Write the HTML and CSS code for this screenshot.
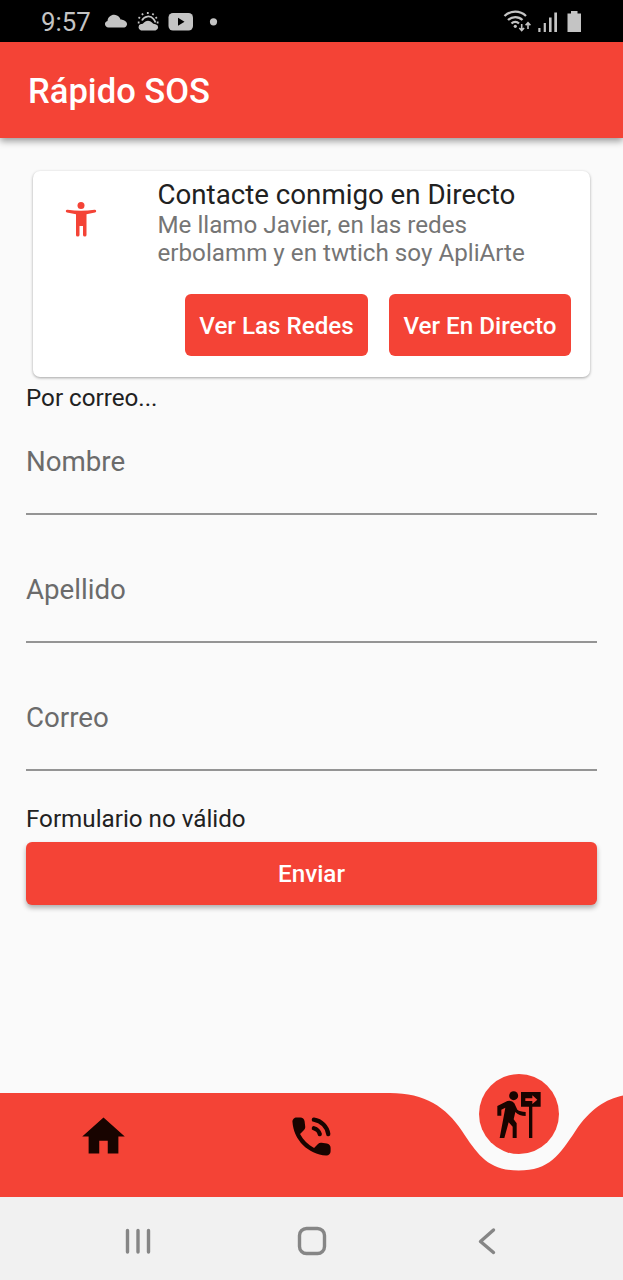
FILE: index.html
```
<!DOCTYPE html>
<html lang="es">
<head>
<meta charset="utf-8">
<title>Rápido SOS</title>
<link rel="stylesheet" href="styles.css">
</head>
<body>
<div class="status">
  <span class="clock">9:57</span>
  <svg class="status-left" width="120" height="24" viewBox="0 0 120 24">
    <path d="M4.500 18.500C.5 18.500-.5 13 3.500 12C4 7 9 4.500 13 6.500C15 7.300 16 9 16.500 10.500C20 10.500 23.500 13 23 15.500C22.500 18 21 18.500 19 18.500z"/>
    <path d="M37 21.500a3.300 3.300 0 0 1 0-6.400c1.500-.1 2-.6 3-1.600a5.500 5.500 0 0 1 8 0c1 1.200 1.800 1.700 3.500 1.700a3.200 3.200 0 0 1 0 6.300z"/>
    <path class="line" d="M38 11.500a6.800 6.800 0 0 1 11.500-1.500q1.500 2 2 3.500"/>
    <path class="dots" d="M33.800 13.500h1.700M34.500 8.300l1.500 1M38 4.500l1 1.500M43.800 3v2M49.500 4.500l-1 1.500M53 8.300l-1.500 1M54.500 13.500h-1.700"/>
    <rect x="64.500" y="4" width="24.500" height="17.500" rx="4.500"/>
    <path class="play" d="M74 8.800v8l6.500-4z"/>
    <circle cx="109.500" cy="12.800" r="3.600"/>
  </svg>
  <svg class="status-right" width="82" height="24" viewBox="0 0 82 24">
    <path class="wifi" d="M2.500 8a15.500 15.500 0 0 1 21.500 0M6 12a10.500 10.500 0 0 1 14.500 0M9.500 15.500a5.500 5.500 0 0 1 7.500 0"/>
    <circle cx="13.300" cy="18.300" r="1.600"/>
    <path class="arrows" d="M19.700 16v6.500M17.300 20l2.400 2.600l2.400-2.600M26 21v-6M23.600 17.200l2.400-2.600l2.400 2.600"/>
    <path d="M36.300 20h2.200v4h-2.200zM41.700 15h2.200v9h-2.200zM47 9.500h2.600v14.500h-2.600zM52.300 4.500h2.700v19.500h-2.700zM65.500 5.500h3.500v-2.500h6.500v2.500h3.500v18.500h-13.500z"/>
  </svg>
</div>
<header class="appbar"><h1 class="appbar-title">Rápido SOS</h1></header>
<main class="content">
  <section class="card">
    <div class="card-head">
      <svg class="person" width="42" height="42" viewBox="0 0 42 42"><circle cx="21" cy="7.500" r="3.500"/><path d="M7.500 11.700Q21 13.700 34.500 11.700Q36 11.600 36.200 13Q36.300 14.300 35 14.600L26.500 16.200V37q0 1.500-1.700 1.500T23 37V28h-3.500v9q0 1.500-1.800 1.500T16 37V16.200L7 14.600Q5.700 14.300 5.800 13Q6 11.600 7.500 11.700z"/></svg>
      <div class="card-text">
        <h2 class="card-title">Contacte conmigo en Directo</h2>
        <p class="card-sub">Me llamo Javier, en las redes<br>erbolamm y en twtich soy ApliArte</p>
      </div>
    </div>
    <div class="card-actions">
      <button class="btn btn-redes">Ver Las Redes</button>
      <button class="btn btn-directo">Ver En Directo</button>
    </div>
  </section>
  <p class="body-text">Por correo...</p>
  <form class="form">
    <label class="field">Nombre</label>
    <label class="field">Apellido</label>
    <label class="field">Correo</label>
    <p class="body-text form-state">Formulario no válido</p>
    <button class="btn btn-send" type="button">Enviar</button>
  </form>
</main>
<nav class="tabs">
  <svg class="wave" width="623" height="104" viewBox="0 0 623 104"><path d="M0 0H390C425 0 446 14 462 38S488 77.500 518.700 77.500S559.400 62 575.400 38C590 16 606 6 623 2.500V104H0z"/></svg>
  <svg class="tab home" width="51" height="51" viewBox="0 0 24 24"><path d="M10 20v-6h4v6h5v-8h3L12 3 2 12h3v8z"/></svg>
  <svg class="tab phone" width="51" height="51" viewBox="0 0 24 24"><path d="M19.230 15.260l-2.540-.29c-.61-.07-1.210.14-1.640.57l-1.840 1.840c-2.830-1.440-5.150-3.750-6.590-6.590l1.850-1.850c.43-.43.64-1.030.57-1.640l-.29-2.520c-.12-1.010-.97-1.770-1.990-1.770H5.030c-1.130 0-2.070.94-2 2.070.53 8.540 7.360 15.360 15.890 15.890 1.130.07 2.070-.87 2.070-2v-1.730c.01-1.010-.75-1.860-1.760-1.980z"/><path class="ring" d="M13.100 4.100A8 8 0 0 1 19.900 10.900M13.100 8.100A4 4 0 0 1 15.900 10.900"/></svg>
  <svg class="tab active" width="80" height="80" viewBox="327 42 240 240">
    <circle class="disc" cx="447" cy="162" r="120"/>
    <circle cx="431" cy="107" r="13.500"/>
    <path d="M382 167V138L412 123Q427 120 433 130L442 149Q450 155 467 156V168Q447 168 436 156L431 178L440 190V234H428V200L416 187L403 234H389L406 143L394 149V167zM453 96H512V140H487V234H477V140H453z"/>
    <path class="sign" d="M466 115H487V106L502 119L487 132V123H466z"/>
  </svg>
</nav>
<footer class="sysnav">
  <svg width="28" height="28" viewBox="0 0 28 28"><path d="M3.500 3.500v21.500M14 3.500v21.500M24.500 3.500v21.500"/></svg>
  <svg class="sys-home" width="30" height="30" viewBox="0 0 30 30"><rect x="2.500" y="2.500" width="25" height="25" rx="7"/></svg>
  <svg width="20" height="28" viewBox="0 0 20 28"><path d="M16.500 3L3.500 14.500L16.500 25.500"/></svg>
</footer>
</body>
</html>
```
FILE: styles.css
```
* { box-sizing: border-box; }
body { margin: 0; width: 623px; height: 1280px; display: flex; flex-direction: column; background: #fafafa; font-family: Roboto, sans-serif; overflow: hidden; }
h1, h2, p { margin: 0; font-weight: 400; }
svg { display: block; flex: none; }
.status { height: 42px; flex: none; background: #000; display: flex; align-items: flex-start; padding: 9px 39px 0 41px; }
.clock { width: 63px; margin-top: -1px; color: #c4c4c4; font-size: 25.800px; line-height: 28px; white-space: nowrap; }
.status-left { fill: #c4c4c4; }
.status-left .line { fill: none; stroke: #c4c4c4; stroke-width: 1.800; }
.status-left .dots { stroke: #c4c4c4; stroke-width: 1.800; }
.status-left .play { fill: #000; }
.status-right { margin: -1px 0 0 auto; fill: #c4c4c4; }
.wifi, .arrows { fill: none; stroke: #c4c4c4; stroke-width: 2.300; }
.arrows { stroke-width: 1.600; }
.appbar { height: 96px; flex: none; background: #f44336; padding: 29px 28px 0; box-shadow: 0 3px 7px rgba(0,0,0,.4); }
.appbar-title { color: #fff; font-size: 34.600px; line-height: 40px; font-weight: 500; }
.content { flex: 1; padding: 33px 26px 0; }
.card { margin: 0 7px; height: 206px; background: #fff; border-radius: 7px; box-shadow: 0 1px 3px rgba(0,0,0,.35); }
.card-head { display: flex; padding: 8px 0 0 27px; height: 123px; }
.person { margin-top: 19px; fill: #f44336; }
.card-text { margin-left: 55.500px; white-space: nowrap; }
.card-title { color: #212121; font-size: 27.700px; line-height: 32px; }
.card-sub { color: #757575; font-size: 24.200px; line-height: 28px; }
.card-actions { display: flex; justify-content: flex-end; gap: 21px; padding-right: 19px; }
.btn { height: 62px; padding: 1px 0 0; border: 0; border-radius: 6px; background: #f44336; color: #fff; font: 500 24.200px/62px Roboto, sans-serif; white-space: nowrap; }
.btn-redes { width: 183px; }
.btn-directo { width: 182px; }
.body-text { color: #212121; font-size: 24.200px; line-height: 28px; padding-top: 7px; }
.form { display: flex; flex-direction: column; }
.field { height: 128px; flex: none; color: #6b6b6b; font-size: 27.700px; line-height: 32px; padding-top: 34px; position: relative; }
.field::after { content: ""; position: absolute; left: 0; right: 0; top: 101px; height: 2px; background: #949494; }
.form-state { padding-top: 9px; }
.btn-send { margin-top: 9px; height: 63px; padding-top: 0; box-shadow: 0 3px 5px rgba(0,0,0,.3); }
.tabs { position: relative; height: 104px; flex: none; }
.wave { fill: #f44336; }
.tab { position: absolute; fill: #180400; }
.home { left: 78px; top: 18px; }
.phone { left: 286px; top: 17.500px; }
.ring { fill: none; stroke: #180400; stroke-width: 2; stroke-linecap: round; }
.active { left: 479px; top: -19px; }
.disc, .sign { fill: #f44336; }
.sysnav { height: 83px; flex: none; background: #f1f1f1; display: flex; justify-content: space-between; align-items: center; padding: 5px 126px 0 124px; }
.sysnav svg { fill: none; stroke: #868686; stroke-width: 3.400; stroke-linecap: round; stroke-linejoin: round; }
.sysnav .sys-home { margin-right: 5px; }
```
